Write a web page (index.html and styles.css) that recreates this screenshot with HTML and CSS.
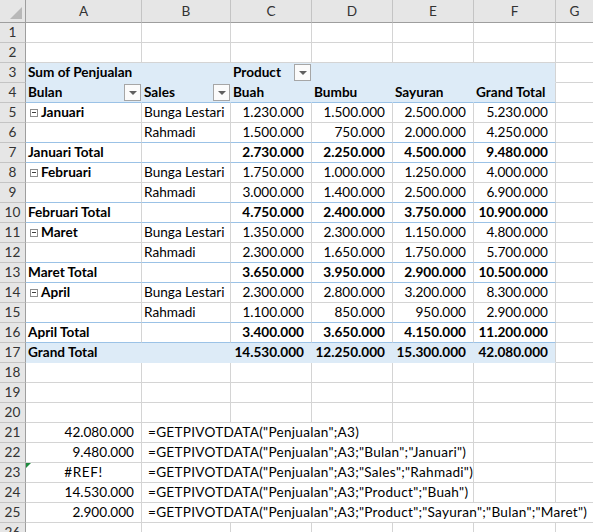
FILE: index.html
```html
<!DOCTYPE html>
<html>
<head>
<meta charset="utf-8">
<title>Pivot</title>
<link rel="stylesheet" href="styles.css">
</head>
<body>
<div class="sheet">
  <div class="hdr">
    <div class="corner"><span class="tri"></span></div>
    <div class="ch">A</div><div class="ch">B</div><div class="ch">C</div><div class="ch">D</div><div class="ch">E</div><div class="ch">F</div><div class="ch last">G</div>
  </div>

  <div class="row"><div class="rh">1</div><div class="c"></div><div class="c"></div><div class="c"></div><div class="c"></div><div class="c"></div><div class="c"></div><div class="c g"></div></div>
  <div class="row"><div class="rh">2</div><div class="c"></div><div class="c"></div><div class="c"></div><div class="c"></div><div class="c"></div><div class="c"></div><div class="c g"></div></div>

  <div class="row top"><div class="rh">3</div><div class="c f s2 b">Sum of Penjualan</div><div class="c f b dcell">Product<span class="dd"><span class="arr"></span></span></div><div class="c f"></div><div class="c f"></div><div class="c f fl"></div><div class="c g"></div></div>
  <div class="row bl"><div class="rh">4</div><div class="c f b dcell">Bulan<span class="dd"><span class="arr"></span></span></div><div class="c f b dcell">Sales<span class="dd"><span class="arr"></span></span></div><div class="c f b">Buah</div><div class="c f b">Bumbu</div><div class="c f b">Sayuran</div><div class="c f fl b">Grand Total</div><div class="c g"></div></div>

  <div class="row"><div class="rh">5</div><div class="c b"><span class="col"></span>Januari</div><div class="c">Bunga Lestari</div><div class="c n">1.230.000</div><div class="c n">1.500.000</div><div class="c n">2.500.000</div><div class="c n">5.230.000</div><div class="c g"></div></div>
  <div class="row bl"><div class="rh">6</div><div class="c"></div><div class="c">Rahmadi</div><div class="c n">1.500.000</div><div class="c n">750.000</div><div class="c n">2.000.000</div><div class="c n">4.250.000</div><div class="c g"></div></div>
  <div class="row bl"><div class="rh">7</div><div class="c b">Januari Total</div><div class="c"></div><div class="c n b">2.730.000</div><div class="c n b">2.250.000</div><div class="c n b">4.500.000</div><div class="c n b">9.480.000</div><div class="c g"></div></div>

  <div class="row"><div class="rh">8</div><div class="c b"><span class="col"></span>Februari</div><div class="c">Bunga Lestari</div><div class="c n">1.750.000</div><div class="c n">1.000.000</div><div class="c n">1.250.000</div><div class="c n">4.000.000</div><div class="c g"></div></div>
  <div class="row bl"><div class="rh">9</div><div class="c"></div><div class="c">Rahmadi</div><div class="c n">3.000.000</div><div class="c n">1.400.000</div><div class="c n">2.500.000</div><div class="c n">6.900.000</div><div class="c g"></div></div>
  <div class="row bl"><div class="rh">10</div><div class="c b">Februari Total</div><div class="c"></div><div class="c n b">4.750.000</div><div class="c n b">2.400.000</div><div class="c n b">3.750.000</div><div class="c n b">10.900.000</div><div class="c g"></div></div>

  <div class="row"><div class="rh">11</div><div class="c b"><span class="col"></span>Maret</div><div class="c">Bunga Lestari</div><div class="c n">1.350.000</div><div class="c n">2.300.000</div><div class="c n">1.150.000</div><div class="c n">4.800.000</div><div class="c g"></div></div>
  <div class="row bl"><div class="rh">12</div><div class="c"></div><div class="c">Rahmadi</div><div class="c n">2.300.000</div><div class="c n">1.650.000</div><div class="c n">1.750.000</div><div class="c n">5.700.000</div><div class="c g"></div></div>
  <div class="row bl"><div class="rh">13</div><div class="c b">Maret Total</div><div class="c"></div><div class="c n b">3.650.000</div><div class="c n b">3.950.000</div><div class="c n b">2.900.000</div><div class="c n b">10.500.000</div><div class="c g"></div></div>

  <div class="row"><div class="rh">14</div><div class="c b"><span class="col"></span>April</div><div class="c">Bunga Lestari</div><div class="c n">2.300.000</div><div class="c n">2.800.000</div><div class="c n">3.200.000</div><div class="c n">8.300.000</div><div class="c g"></div></div>
  <div class="row bl"><div class="rh">15</div><div class="c"></div><div class="c">Rahmadi</div><div class="c n">1.100.000</div><div class="c n">850.000</div><div class="c n">950.000</div><div class="c n">2.900.000</div><div class="c g"></div></div>
  <div class="row bl"><div class="rh">16</div><div class="c b">April Total</div><div class="c"></div><div class="c n b">3.400.000</div><div class="c n b">3.650.000</div><div class="c n b">4.150.000</div><div class="c n b">11.200.000</div><div class="c g"></div></div>

  <div class="row"><div class="rh">17</div><div class="c f s2 b">Grand Total</div><div class="c f n b">14.530.000</div><div class="c f n b">12.250.000</div><div class="c f n b">15.300.000</div><div class="c f fl n b">42.080.000</div><div class="c g"></div></div>

  <div class="row"><div class="rh">18</div><div class="c"></div><div class="c"></div><div class="c"></div><div class="c"></div><div class="c"></div><div class="c"></div><div class="c g"></div></div>
  <div class="row"><div class="rh">19</div><div class="c"></div><div class="c"></div><div class="c"></div><div class="c"></div><div class="c"></div><div class="c"></div><div class="c g"></div></div>
  <div class="row"><div class="rh">20</div><div class="c"></div><div class="c"></div><div class="c"></div><div class="c"></div><div class="c"></div><div class="c"></div><div class="c g"></div></div>

  <div class="row"><div class="rh">21</div><div class="c n">42.080.000</div><div class="c fx s3">=GETPIVOTDATA("Penjualan";A3)</div><div class="c"></div><div class="c"></div><div class="c g"></div></div>
  <div class="row"><div class="rh">22</div><div class="c n">9.480.000</div><div class="c fx s4">=GETPIVOTDATA("Penjualan";A3;"Bulan";"Januari")</div><div class="c"></div><div class="c g"></div></div>
  <div class="row"><div class="rh">23</div><div class="c ctr err"><span class="warn"></span>#REF!</div><div class="c fx s4">=GETPIVOTDATA("Penjualan";A3;"Sales";"Rahmadi")</div><div class="c"></div><div class="c g"></div></div>
  <div class="row"><div class="rh">24</div><div class="c n">14.530.000</div><div class="c fx s4">=GETPIVOTDATA("Penjualan";A3;"Product";"Buah")</div><div class="c"></div><div class="c g"></div></div>
  <div class="row"><div class="rh">25</div><div class="c n">2.900.000</div><div class="c fx s6 g">=GETPIVOTDATA("Penjualan";A3;"Product";"Sayuran";"Bulan";"Maret")</div></div>
  <div class="row"><div class="rh">26</div><div class="c"></div><div class="c"></div><div class="c"></div><div class="c"></div><div class="c"></div><div class="c"></div><div class="c g"></div></div>
</div>
</body>
</html>
```

FILE: styles.css
```css
html, body {
  margin: 0;
  padding: 0;
  background: #ffffff;
}
body {
  width: 593px;
  height: 532px;
  overflow: hidden;
}
.sheet {
  font-family: "Lato", "Liberation Sans", sans-serif;
  font-size: 13.6px;
  color: #000;
}
.hdr, .row {
  display: grid;
  grid-template-columns: 26px 116px 89px 81px 81px 81px 82px 1fr;
}
.hdr {
  height: 23px;
}
.row {
  height: 20px;
}
.corner {
  position: relative;
  background: #e6e6e6;
  border-right: 1px solid #9e9e9e;
  border-bottom: 1px solid #9e9e9e;
  box-sizing: border-box;
}
.tri {
  position: absolute;
  right: 3px;
  bottom: 3px;
  width: 0;
  height: 0;
  border-left: 12px solid transparent;
  border-bottom: 12px solid #b8b8b8;
}
.ch {
  background: #e6e6e6;
  border-right: 1px solid #c4c4c4;
  border-bottom: 1px solid #9e9e9e;
  box-sizing: border-box;
  text-align: center;
  line-height: 22px;
  color: #333;
}
.ch.last {
  border-right: none;
}
.rh {
  background: #e6e6e6;
  border-right: 1px solid #9e9e9e;
  border-bottom: 1px solid #c4c4c4;
  box-sizing: border-box;
  text-align: center;
  line-height: 19px;
  color: #333;
}
.c {
  position: relative;
  box-sizing: border-box;
  height: 20px;
  border-right: 1px solid #d4d4d4;
  border-bottom: 1px solid #d4d4d4;
  padding: 0 2px;
  line-height: 19px;
  white-space: nowrap;
}
.c.g {
  border-right: none;
}
.b {
  font-weight: bold;
}
.n {
  text-align: right;
  padding-right: 7px;
}
.ctr {
  text-align: center;
  letter-spacing: 0.6px;
}
.s2 { grid-column: span 2; }
.s3 { grid-column: span 3; }
.s4 { grid-column: span 4; }
.s6 { grid-column: span 6; }

/* pivot fill */
.c.f {
  background: #ddebf7;
  border-right-color: #ddebf7;
  border-bottom-color: #ddebf7;
}
.c.f.fl {
  border-right-color: #d4d4d4;
}
.row.bl .c:not(.g) {
  border-bottom-color: #9bc2e6;
}
.row.top .c.f {
  border-bottom-color: #ddebf7;
}

/* dropdown cells */
.dcell {
  display: flex;
  align-items: center;
  padding-right: 0;
}
.dd {
  margin-left: auto;
  box-sizing: border-box;
  width: 17px;
  height: 17px;
  border: 1px solid #a6a6a6;
  background: #fbfbfb;
  display: flex;
  align-items: center;
  justify-content: center;
}
.arr {
  width: 0;
  height: 0;
  border-left: 4px solid transparent;
  border-right: 4px solid transparent;
  border-top: 4px solid #5f5f5f;
  margin-top: 1px;
}

/* collapse button */
.col {
  display: inline-block;
  position: relative;
  box-sizing: border-box;
  width: 8px;
  height: 8px;
  border: 1px solid #8c8c8c;
  background: #fff;
  margin-left: 2px;
  margin-right: 3px;
  vertical-align: 0px;
}
.col::after {
  content: "";
  position: absolute;
  left: 1px;
  right: 1px;
  top: 2px;
  height: 1px;
  background: #404040;
}

.fx {
  padding-left: 6px;
  letter-spacing: 0.27px;
}
.warn {
  position: absolute;
  left: 0;
  top: 0;
  width: 0;
  height: 0;
  border-top: 5px solid #1e8a3e;
  border-right: 5px solid transparent;
}
```
